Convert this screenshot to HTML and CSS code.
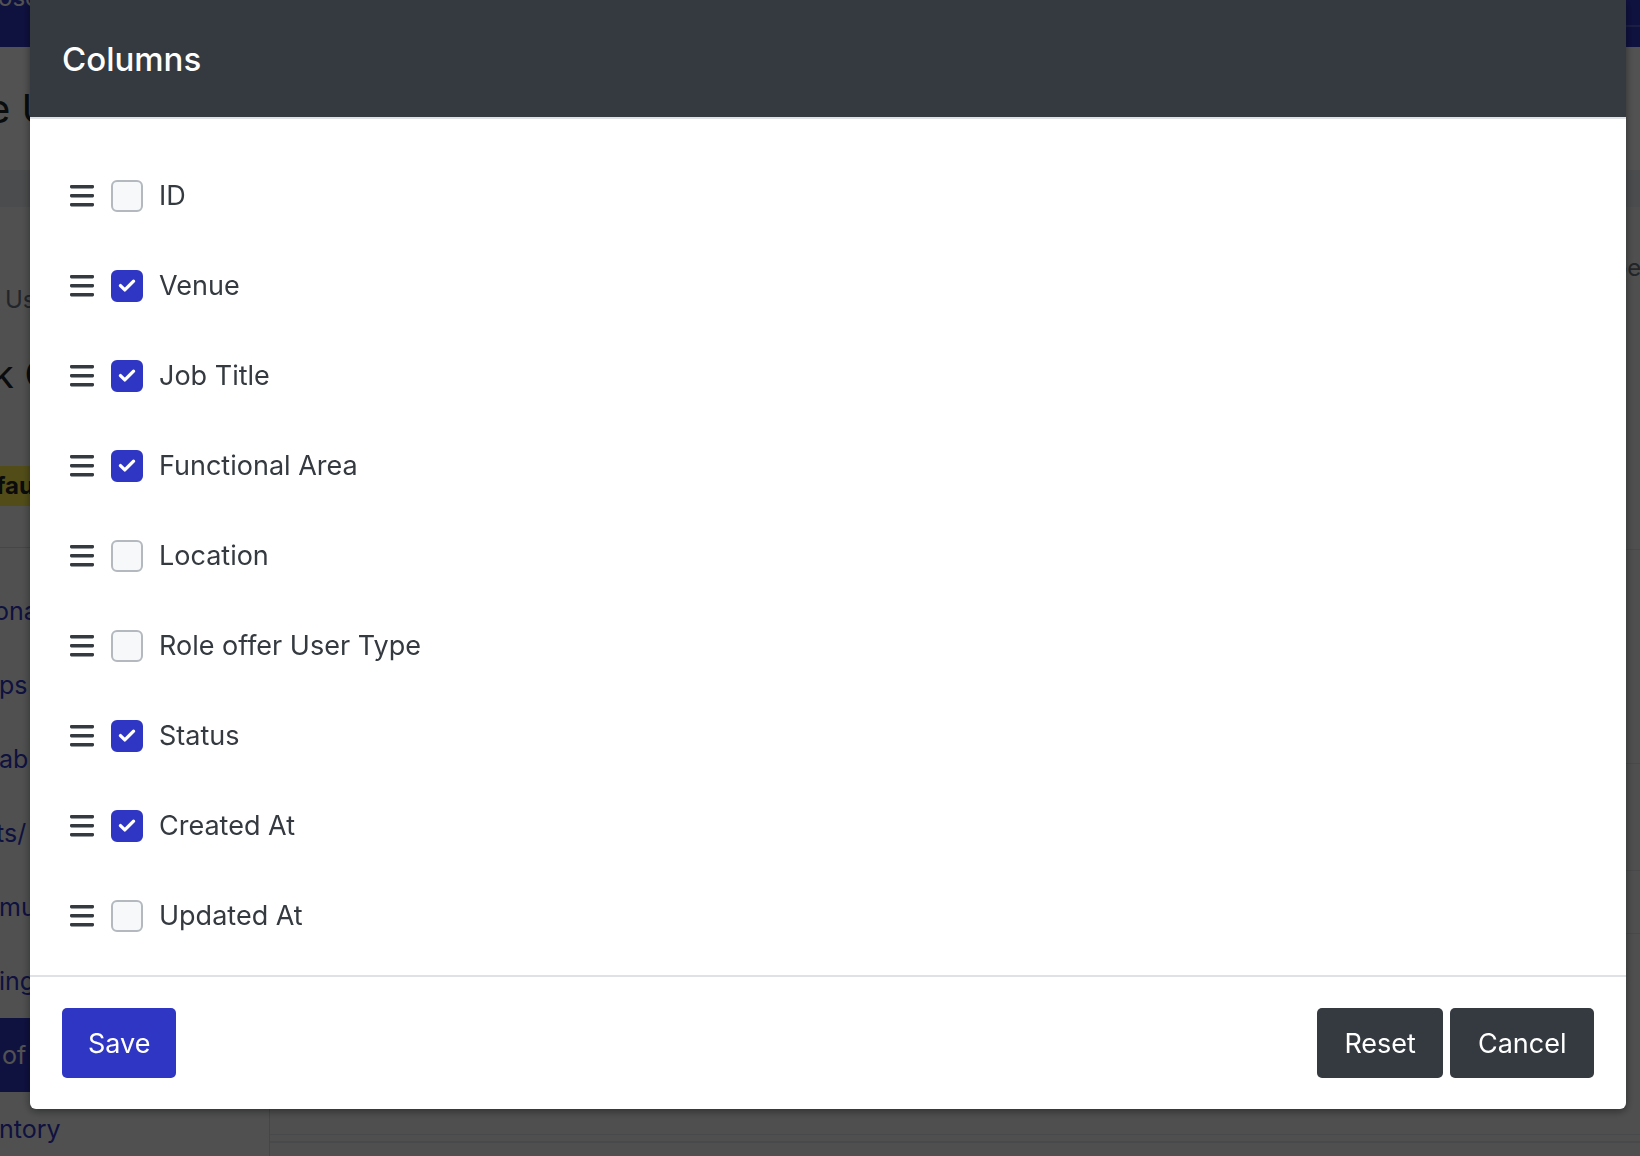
FILE: index.html
```html
<!DOCTYPE html>
<html lang="en">
<head>
<meta charset="utf-8">
<title>Columns</title>
<link rel="stylesheet" href="styles.css">
</head>
<body>
<div class="page">
  <header class="topnav">
    <span class="brand">ose</span>
    <span class="topnav-right"></span>
  </header>
  <div class="page-head"><h1 class="page-title">e User Types</h1></div>
  <div class="band"></div>
  <div class="layout">
    <aside class="side">
      <div class="user-card">
        <div class="user-kicker">Users</div>
        <div class="user-name">k Create</div>
        <span class="badge">fault</span>
      </div>
      <ul class="side-nav">
        <li class="cut">onal Areas</li>
        <li>ps</li>
        <li>ab Lists</li>
        <li class="cut-sm">ts/ Shifts</li>
        <li>mu</li>
        <li>ing</li>
        <li class="active">of</li>
        <li>ntory</li>
      </ul>
    </aside>
    <main class="main">
      <div class="toolbar"><span class="tool-text">Types</span></div>
      <div class="table">
        <div class="trow tall"></div>
        <div class="trow mid"></div>
        <div class="trow short"></div>
        <div class="trow last"></div>
      </div>
      <div class="card-bottom"></div>
    </main>
  </div>
</div>

<div class="backdrop"></div>

<div class="modal" role="dialog" aria-labelledby="modal-title">
  <div class="modal-header">
    <h5 class="modal-title" id="modal-title">Columns</h5>
  </div>
  <div class="modal-body">
    <div class="col-row">
      <svg class="grip" viewBox="0 0 24 22" aria-hidden="true"><rect x="0" y="0" width="24" height="3.4" rx="1.3"/><rect x="0" y="9" width="24" height="3.4" rx="1.3"/><rect x="0" y="18" width="24" height="3.4" rx="1.3"/></svg>
      <span class="cb"></span>
      <span class="col-label">ID</span>
    </div>
    <div class="col-row">
      <svg class="grip" viewBox="0 0 24 22" aria-hidden="true"><rect x="0" y="0" width="24" height="3.4" rx="1.3"/><rect x="0" y="9" width="24" height="3.4" rx="1.3"/><rect x="0" y="18" width="24" height="3.4" rx="1.3"/></svg>
      <span class="cb checked"><svg viewBox="0 0 32 32" aria-hidden="true"><path d="M8.5 15.5 L13.5 20.5 L23.5 10.5"/></svg></span>
      <span class="col-label">Venue</span>
    </div>
    <div class="col-row">
      <svg class="grip" viewBox="0 0 24 22" aria-hidden="true"><rect x="0" y="0" width="24" height="3.4" rx="1.3"/><rect x="0" y="9" width="24" height="3.4" rx="1.3"/><rect x="0" y="18" width="24" height="3.4" rx="1.3"/></svg>
      <span class="cb checked"><svg viewBox="0 0 32 32" aria-hidden="true"><path d="M8.5 15.5 L13.5 20.5 L23.5 10.5"/></svg></span>
      <span class="col-label">Job Title</span>
    </div>
    <div class="col-row">
      <svg class="grip" viewBox="0 0 24 22" aria-hidden="true"><rect x="0" y="0" width="24" height="3.4" rx="1.3"/><rect x="0" y="9" width="24" height="3.4" rx="1.3"/><rect x="0" y="18" width="24" height="3.4" rx="1.3"/></svg>
      <span class="cb checked"><svg viewBox="0 0 32 32" aria-hidden="true"><path d="M8.5 15.5 L13.5 20.5 L23.5 10.5"/></svg></span>
      <span class="col-label">Functional Area</span>
    </div>
    <div class="col-row">
      <svg class="grip" viewBox="0 0 24 22" aria-hidden="true"><rect x="0" y="0" width="24" height="3.4" rx="1.3"/><rect x="0" y="9" width="24" height="3.4" rx="1.3"/><rect x="0" y="18" width="24" height="3.4" rx="1.3"/></svg>
      <span class="cb"></span>
      <span class="col-label">Location</span>
    </div>
    <div class="col-row">
      <svg class="grip" viewBox="0 0 24 22" aria-hidden="true"><rect x="0" y="0" width="24" height="3.4" rx="1.3"/><rect x="0" y="9" width="24" height="3.4" rx="1.3"/><rect x="0" y="18" width="24" height="3.4" rx="1.3"/></svg>
      <span class="cb"></span>
      <span class="col-label">Role offer User Type</span>
    </div>
    <div class="col-row">
      <svg class="grip" viewBox="0 0 24 22" aria-hidden="true"><rect x="0" y="0" width="24" height="3.4" rx="1.3"/><rect x="0" y="9" width="24" height="3.4" rx="1.3"/><rect x="0" y="18" width="24" height="3.4" rx="1.3"/></svg>
      <span class="cb checked"><svg viewBox="0 0 32 32" aria-hidden="true"><path d="M8.5 15.5 L13.5 20.5 L23.5 10.5"/></svg></span>
      <span class="col-label">Status</span>
    </div>
    <div class="col-row">
      <svg class="grip" viewBox="0 0 24 22" aria-hidden="true"><rect x="0" y="0" width="24" height="3.4" rx="1.3"/><rect x="0" y="9" width="24" height="3.4" rx="1.3"/><rect x="0" y="18" width="24" height="3.4" rx="1.3"/></svg>
      <span class="cb checked"><svg viewBox="0 0 32 32" aria-hidden="true"><path d="M8.5 15.5 L13.5 20.5 L23.5 10.5"/></svg></span>
      <span class="col-label">Created At</span>
    </div>
    <div class="col-row">
      <svg class="grip" viewBox="0 0 24 22" aria-hidden="true"><rect x="0" y="0" width="24" height="3.4" rx="1.3"/><rect x="0" y="9" width="24" height="3.4" rx="1.3"/><rect x="0" y="18" width="24" height="3.4" rx="1.3"/></svg>
      <span class="cb"></span>
      <span class="col-label">Updated At</span>
    </div>
  </div>
  <div class="modal-footer">
    <button class="btn btn-primary" type="button">Save</button>
    <div class="btn-group">
      <button class="btn btn-dark" type="button">Reset</button>
      <button class="btn btn-dark" type="button">Cancel</button>
    </div>
  </div>
</div>
</body>
</html>
```

FILE: styles.css
```css
html, body {
  margin: 0;
  padding: 0;
  width: 1640px;
  height: 1156px;
  overflow: hidden;
}

body {
  font-family: Inter, "Noto Sans", "Liberation Sans", sans-serif;
  background: #f4f5f7;
  color: #212529;
}

/* ---------- background page ---------- */
.page {
  width: 1640px;
  height: 1156px;
  overflow: hidden;
}

.topnav {
  height: 47px;
  background: #3036c4;
  color: #ffffff;
  display: flex;
  justify-content: space-between;
  overflow: hidden;
}

.brand {
  display: block;
  font-size: 24px;
  line-height: 24px;
  margin-top: -14px;
  margin-left: -2px;
}

.topnav-right {
  width: 60px;
  height: 22px;
  margin-top: 25px;
  border-top: 2px solid #5a5fd0;
}

.page-head {
  height: 123px;
  background: #ffffff;
  display: flex;
  align-items: center;
}

.page-title {
  margin: 0 0 0 -13px;
  font-size: 40px;
  font-weight: 400;
  line-height: 48px;
  color: #212529;
}

.band {
  height: 37px;
  background: #e9ecef;
}

.layout {
  display: flex;
  height: 949px;
}

.side {
  width: 269px;
  flex: none;
  background: #f8f9fa;
  border-right: 1px solid #d6d8db;
  overflow: hidden;
}

.user-card {
  padding: 77px 0 41px;
  border-bottom: 1px solid #d6d8db;
}

.user-kicker {
  font-size: 24px;
  line-height: 32px;
  color: #6c757d;
  margin-left: 5px;
}

.user-name {
  margin: 34px 0 0 -7px;
  font-size: 38px;
  line-height: 48px;
  color: #212529;
}

.badge {
  display: inline-block;
  margin: 68px 0 0 -4px;
  padding: 0 10px 0 0;
  height: 40px;
  line-height: 40px;
  background: #fff04d;
  font-size: 24px;
  font-weight: 700;
  color: #212529;
}

.side-nav {
  list-style: none;
  margin: 0;
  padding: 26px 0 0;
}

.side-nav li {
  height: 74px;
  line-height: 74px;
  font-size: 25px;
  color: #3036c4;
  margin-left: -1px;
  white-space: nowrap;
}

.side-nav li.cut {
  margin-left: -6px;
}

.side-nav li.cut-sm {
  margin-left: -4px;
}

.side-nav li.active {
  background: #3036c4;
  color: #ffffff;
  margin-left: 0;
  padding-left: 2px;
}

.main {
  flex: 1;
  display: flex;
  flex-direction: column;
  overflow: hidden;
}

.toolbar {
  height: 120px;
  display: flex;
  justify-content: flex-end;
  align-items: center;
  margin-right: -14px;
}

.tool-text {
  font-size: 24px;
  color: #6c757d;
}

.table {
  margin-top: 222px;
  border-top: 1px solid #dee2e6;
}

.trow {
  border-bottom: 1px solid #dee2e6;
}

.trow.tall { height: 213px; }
.trow.mid { height: 106px; }
.trow.short { height: 62px; }
.trow.last { height: 200px; }

.card-bottom {
  margin-top: 6px;
  border-top: 2px solid #e0e2e5;
  flex: 1;
}

/* ---------- modal ---------- */
.backdrop {
  position: fixed;
  inset: 0;
  background: rgba(0, 0, 0, 0.68);
}

.modal {
  position: fixed;
  left: 30px;
  top: 0;
  width: 1596px;
  background: #ffffff;
  border-radius: 0 0 6px 6px;
  box-shadow: 0 2px 8px rgba(0, 0, 0, 0.45);
  overflow: hidden;
  font-family: Inter, "Noto Sans", "Liberation Sans", sans-serif;
}

.modal-header {
  height: 117px;
  background: #343a40;
  border-bottom: 2px solid #dee2e6;
  display: flex;
  align-items: center;
  padding-left: 32px;
}

.modal-title {
  margin: 0;
  font-size: 33px;
  font-weight: 500;
  line-height: 40px;
  color: #ffffff;
}

.modal-body {
  padding: 32px 40px 14px;
}

.col-row {
  height: 90px;
  display: flex;
  align-items: center;
}

.grip {
  width: 24px;
  height: 22px;
  margin-right: 17px;
  fill: #343a40;
  flex: none;
}

.cb {
  width: 32px;
  height: 32px;
  box-sizing: border-box;
  border: 2px solid #b3b9bf;
  border-radius: 6px;
  background: #f6f8fa;
  margin-right: 16px;
  flex: none;
  display: flex;
}

.cb.checked {
  background: #2f36c4;
  border-color: #2f36c4;
}

.cb svg {
  width: 28px;
  height: 28px;
  fill: none;
  stroke: #ffffff;
  stroke-width: 3.8;
  stroke-linecap: round;
  stroke-linejoin: round;
}

.col-label {
  font-size: 27px;
  line-height: 34px;
  color: #343a40;
}

.modal-footer {
  border-top: 2px solid #dee2e6;
  padding: 31px 32px;
  display: flex;
  justify-content: space-between;
  align-items: center;
}

.btn-group {
  display: flex;
  gap: 7px;
}

.btn {
  height: 70px;
  padding: 0 26px;
  border: none;
  border-radius: 5px;
  font-family: Inter, "Noto Sans", "Liberation Sans", sans-serif;
  font-size: 27px;
  font-weight: 400;
  color: #ffffff;
  cursor: pointer;
}

.btn-primary {
  background: #2f36c4;
}

.btn-dark {
  background: #343a40;
  padding: 0 27.5px;
}
```
